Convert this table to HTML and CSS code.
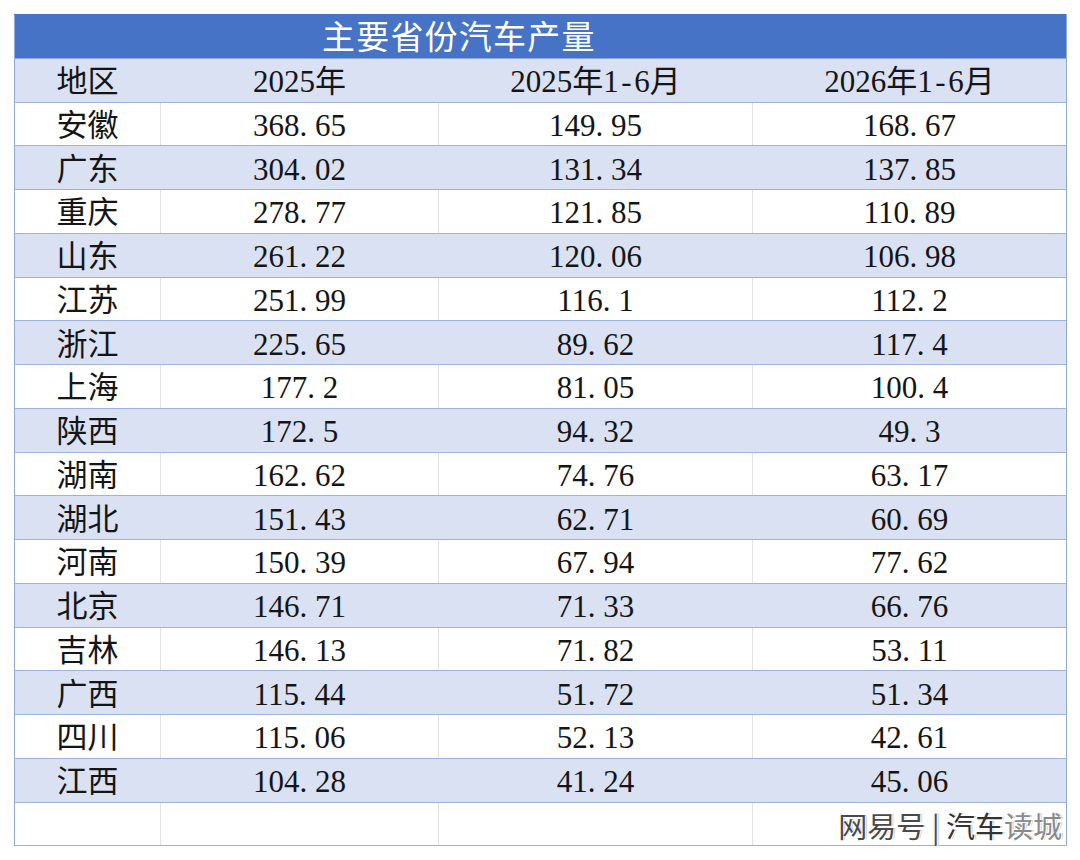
FILE: index.html
```html
<!DOCTYPE html>
<html lang="zh-CN">
<head>
<meta charset="utf-8">
<title>主要省份汽车产量</title>
<link rel="stylesheet" href="styles.css">
</head>
<body>
<div class="page">
<table class="sheet">
  <colgroup>
    <col class="c1"><col class="c2"><col class="c3"><col class="c4">
  </colgroup>
  <thead>
    <tr class="title"><th colspan="4"><span class="title-text">主要省份汽车产量</span></th></tr>
    <tr class="head shade"><th>地区</th><th>2025年</th><th>2025年1<span class="h">-</span>6月</th><th>2026年1<span class="h">-</span>6月</th></tr>
  </thead>
  <tbody>
    <tr><td>安徽</td><td>368<span class="d">.</span>65</td><td>149<span class="d">.</span>95</td><td>168<span class="d">.</span>67</td></tr>
    <tr class="shade"><td>广东</td><td>304<span class="d">.</span>02</td><td>131<span class="d">.</span>34</td><td>137<span class="d">.</span>85</td></tr>
    <tr><td>重庆</td><td>278<span class="d">.</span>77</td><td>121<span class="d">.</span>85</td><td>110<span class="d">.</span>89</td></tr>
    <tr class="shade"><td>山东</td><td>261<span class="d">.</span>22</td><td>120<span class="d">.</span>06</td><td>106<span class="d">.</span>98</td></tr>
    <tr><td>江苏</td><td>251<span class="d">.</span>99</td><td>116<span class="d">.</span>1</td><td>112<span class="d">.</span>2</td></tr>
    <tr class="shade"><td>浙江</td><td>225<span class="d">.</span>65</td><td>89<span class="d">.</span>62</td><td>117<span class="d">.</span>4</td></tr>
    <tr><td>上海</td><td>177<span class="d">.</span>2</td><td>81<span class="d">.</span>05</td><td>100<span class="d">.</span>4</td></tr>
    <tr class="shade"><td>陕西</td><td>172<span class="d">.</span>5</td><td>94<span class="d">.</span>32</td><td>49<span class="d">.</span>3</td></tr>
    <tr><td>湖南</td><td>162<span class="d">.</span>62</td><td>74<span class="d">.</span>76</td><td>63<span class="d">.</span>17</td></tr>
    <tr class="shade"><td>湖北</td><td>151<span class="d">.</span>43</td><td>62<span class="d">.</span>71</td><td>60<span class="d">.</span>69</td></tr>
    <tr><td>河南</td><td>150<span class="d">.</span>39</td><td>67<span class="d">.</span>94</td><td>77<span class="d">.</span>62</td></tr>
    <tr class="shade"><td>北京</td><td>146<span class="d">.</span>71</td><td>71<span class="d">.</span>33</td><td>66<span class="d">.</span>76</td></tr>
    <tr><td>吉林</td><td>146<span class="d">.</span>13</td><td>71<span class="d">.</span>82</td><td>53<span class="d">.</span>11</td></tr>
    <tr class="shade"><td>广西</td><td>115<span class="d">.</span>44</td><td>51<span class="d">.</span>72</td><td>51<span class="d">.</span>34</td></tr>
    <tr><td>四川</td><td>115<span class="d">.</span>06</td><td>52<span class="d">.</span>13</td><td>42<span class="d">.</span>61</td></tr>
    <tr class="shade"><td>江西</td><td>104<span class="d">.</span>28</td><td>41<span class="d">.</span>24</td><td>45<span class="d">.</span>06</td></tr>
    <tr class="blank"><td></td><td></td><td></td><td class="mark-cell"><span class="mark">网易号 | <span class="mark-b">汽车</span><span class="mark-c">读城</span></span></td></tr>
  </tbody>
</table>
</div>
</body>
</html>
```

FILE: styles.css
```css
html, body {
  margin: 0;
  padding: 0;
  background: #ffffff;
}

.page {
  padding: 14px 0 0 14px;
}

.sheet {
  border-collapse: collapse;
  table-layout: fixed;
  width: 1052px;
  border: 1px solid #8ea9db;
  font-family: "Liberation Serif", "Noto Sans CJK SC", serif;
  font-size: 31px;
  color: #151515;
}

.c1 { width: 146px; }
.c2 { width: 278px; }
.c3 { width: 314px; }
.c4 { width: 314px; }

.sheet tr {
  height: 43.75px;
}

.sheet th,
.sheet td {
  padding: 3px 0 0 0;
  font-weight: 400;
  text-align: center;
  vertical-align: middle;
  line-height: 1;
  border-top: 1px solid #9db3de;
  border-bottom: 1px solid #9db3de;
  border-left: 1px solid #e3e3e3;
  border-right: 1px solid #e3e3e3;
  white-space: nowrap;
}

.sheet .title th {
  background: #4673c6;
  color: #ffffff;
  text-align: left;
  font-size: 33px;
  padding-top: 4px;
  border-color: #4673c6;
  border-bottom-color: #8ea9db;
}

.title-text {
  padding-left: 307px;
  letter-spacing: 1.2px;
}

.shade td,
.shade th {
  background: #d9e1f3;
  border-left-color: #d9e1f3;
  border-right-color: #d9e1f3;
}

.sheet tr > :first-child { border-left-color: #8ea9db; }
.sheet tr > :last-child { border-right-color: #8ea9db; }

.d {
  margin-right: 0.25em;
}

.h {
  display: inline-block;
  width: 0.5em;
}

.mark-cell {
  position: relative;
}

.mark {
  position: absolute;
  right: 4px;
  top: 50%;
  transform: translateY(-46%);
  font-family: "Noto Sans CJK SC", sans-serif;
  font-size: 29px;
  color: #4a4a4a;
  text-shadow: 1px 1px 0 #ffffff, -1px -1px 0 #ffffff, 2px 0 0 #d0d0d0;
}

.mark-b {
  color: #333333;
}

.mark-c {
  color: #8a8a8a;
}
```
